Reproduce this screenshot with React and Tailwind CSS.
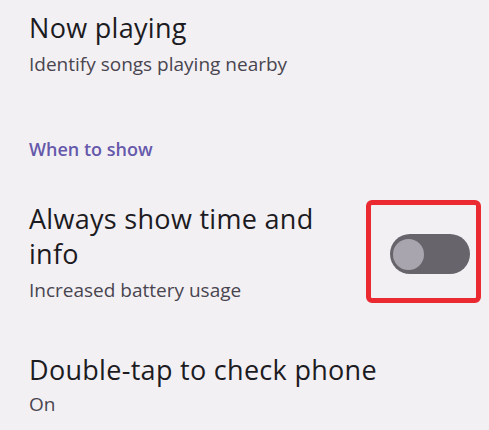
// Ajustes de pantalla siempre activa: reproduccion y cuando mostrar
export default function App() {
  const font = { fontFamily: '"Open Sans", Roboto, sans-serif' }

  return (
    <div className="w-[489px] h-[430px] overflow-hidden bg-[#f3f0f4] pl-[29px]" style={font}>
      {/* Now playing */}
      <div className="pt-[10px]">
        <p className="text-[27px] leading-[35px] tracking-[0.3px] text-[#1c1b1f]">Now playing</p>
        <p className="mt-[6px] text-[19px] leading-[26px] text-[#49454f]">Identify songs playing nearby</p>
      </div>

      {/* Encabezado de seccion */}
      <p className="mt-[60px] text-[18px] leading-[24px] font-semibold text-[#6659ab]">When to show</p>

      {/* Fila con interruptor */}
      <div className="mt-[39px] flex items-center">
        <div className="flex-1 min-w-0 pr-4">
          <p className="text-[27px] leading-[35px] tracking-[0.3px] text-[#1c1b1f]">Always show time and info</p>
          <p className="mt-[6px] text-[19px] leading-[26px] text-[#49454f]">Increased battery usage</p>
        </div>
        <div className="w-[115px] h-[103px] mr-[8px] shrink-0 border-[5px] border-[#ea2a30] rounded-[6px] pl-[19px] pt-[29px]">
          <div className="w-[80px] h-[40px] rounded-full bg-[#68646c] flex items-center pl-[3px]">
            <div className="w-[31px] h-[31px] rounded-full bg-[#a9a5ae]" />
          </div>
        </div>
      </div>

      {/* Double-tap */}
      <div className="mt-[49px]">
        <p className="text-[27px] leading-[35px] tracking-[0.3px] text-[#1c1b1f]">Double-tap to check phone</p>
        <p className="mt-[4px] text-[19px] leading-[26px] text-[#49454f]">On</p>
      </div>
    </div>
  )
}
